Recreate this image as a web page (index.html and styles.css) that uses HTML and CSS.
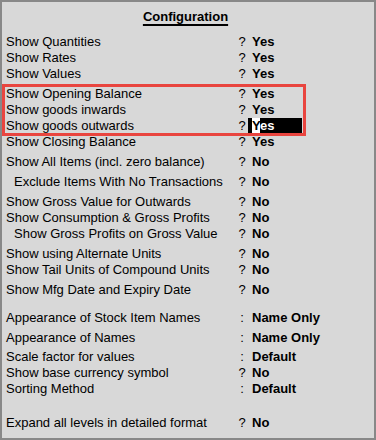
FILE: index.html
```html
<!DOCTYPE HTML>
<html>
    <head>
        <meta http-equiv="Content-Type" content="text/html; charset=UTF-8">
        <title>Configuration</title>
        <link rel="stylesheet" href="styles.css">
    </head>
    <body>
        <div class="panel">
            <div class="title"><span>Configuration</span></div>

            <div class="row"><span class="label">Show Quantities</span><span class="sep">?</span><span class="val">Yes</span></div>
            <div class="row"><span class="label">Show Rates</span><span class="sep">?</span><span class="val">Yes</span></div>
            <div class="row"><span class="label">Show Values</span><span class="sep">?</span><span class="val">Yes</span></div>

            <div class="marked gap">
                <div class="row"><span class="label">Show Opening Balance</span><span class="sep">?</span><span class="val">Yes</span></div>
                <div class="row"><span class="label">Show goods inwards</span><span class="sep">?</span><span class="val">Yes</span></div>
                <div class="row"><span class="label">Show goods outwards</span><span class="sep">?</span><span class="val active"><span class="caret">Y</span>es</span></div>
            </div>
            <div class="row"><span class="label">Show Closing Balance</span><span class="sep">?</span><span class="val">Yes</span></div>

            <div class="row gap"><span class="label">Show All Items (incl. zero balance)</span><span class="sep">?</span><span class="val">No</span></div>
            <div class="row gap sub"><span class="label">Exclude Items With No Transactions</span><span class="sep">?</span><span class="val">No</span></div>

            <div class="row gap"><span class="label">Show Gross Value for Outwards</span><span class="sep">?</span><span class="val">No</span></div>
            <div class="row"><span class="label">Show Consumption &amp; Gross Profits</span><span class="sep">?</span><span class="val">No</span></div>
            <div class="row sub"><span class="label">Show Gross Profits on Gross Value</span><span class="sep">?</span><span class="val">No</span></div>

            <div class="row gap"><span class="label">Show using Alternate Units</span><span class="sep">?</span><span class="val">No</span></div>
            <div class="row"><span class="label">Show Tail Units of Compound Units</span><span class="sep">?</span><span class="val">No</span></div>
            <div class="row gap"><span class="label">Show Mfg Date and Expiry Date</span><span class="sep">?</span><span class="val">No</span></div>

            <div class="row gap-lg"><span class="label">Appearance of Stock Item Names</span><span class="sep">:</span><span class="val">Name Only</span></div>
            <div class="row gap"><span class="label">Appearance of Names</span><span class="sep">:</span><span class="val">Name Only</span></div>

            <div class="row gap-sm"><span class="label">Scale factor for values</span><span class="sep">:</span><span class="val">Default</span></div>
            <div class="row"><span class="label">Show base currency symbol</span><span class="sep">?</span><span class="val">No</span></div>
            <div class="row"><span class="label">Sorting Method</span><span class="sep">:</span><span class="val">Default</span></div>

            <div class="row gap-xl"><span class="label">Expand all levels in detailed format</span><span class="sep">?</span><span class="val">No</span></div>
        </div>
    </body>
</html>
```

FILE: styles.css
```css
body {
    margin: 0;
    font-family: "Liberation Sans", Arial, sans-serif;
    font-size: 13px;
    color: #000;
}

.panel {
    width: 376px;
    height: 440px;
    box-sizing: border-box;
    border: 2px solid #888;
    background: #d8d8d8;
    padding: 7px 0 0 4px;
    overflow: hidden;
}

.title {
    line-height: 16px;
    font-weight: bold;
    text-align: center;
    padding-right: 9px;
    margin-bottom: 9px;
}
.title span {
    text-decoration: underline;
    text-decoration-thickness: 2px;
    text-underline-offset: 3px;
}

.row {
    display: grid;
    grid-template-columns: 230px 12px 54px;
    height: 16px;
    line-height: 16px;
    white-space: nowrap;
}
.sub .label {
    padding-left: 8px;
}
.sep {
    text-align: center;
}
.val {
    font-weight: bold;
    padding-left: 4px;
}
.val.active {
    background: #000;
    color: #fff;
}
.caret {
    background: #fff;
    color: #000;
}

.gap { margin-top: 4px; }
.gap-sm { margin-top: 3px; }
.gap-lg { margin-top: 12px; }
.gap-xl { margin-top: 18px; }

/* red annotation round the three rows */
.marked {
    position: relative;
    width: 296px;
}
.marked::after {
    content: "";
    position: absolute;
    top: -2px;
    bottom: -2px;
    left: -4px;
    right: -4px;
    border: 3px solid #e9453f;
}
```
